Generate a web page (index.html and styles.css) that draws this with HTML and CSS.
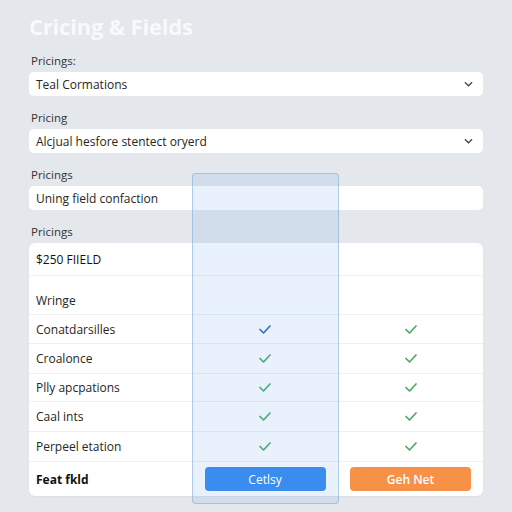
FILE: index.html
```html
<!DOCTYPE html>
<html>
<head>
<meta charset="utf-8">
<link rel="stylesheet" href="styles.css">
</head>
<body>
<div class="page">
  <h1 class="title">Cricing &amp; Fields</h1>

  <div class="field">
    <div class="label">Pricings:</div>
    <div class="box">
      <span>Teal Cormations</span>
      <svg class="chev" viewBox="0 0 10 6" width="9" height="6"><polyline points="1,1 5,5 9,1" fill="none" stroke="#444" stroke-width="1.4"/></svg>
    </div>
  </div>

  <div class="field">
    <div class="label">Pricing</div>
    <div class="box">
      <span>Alcjual hesfore stentect oryerd</span>
      <svg class="chev" viewBox="0 0 10 6" width="9" height="6"><polyline points="1,1 5,5 9,1" fill="none" stroke="#444" stroke-width="1.4"/></svg>
    </div>
  </div>

  <div class="field">
    <div class="label">Pricings</div>
    <div class="box"><span>Uning field confaction</span></div>
  </div>

  <div class="field">
    <div class="label">Pricings</div>
    <div class="card">
      <div class="row r-head"><div class="cell name strong">$250 FIIELD</div><div></div><div></div></div>
      <div class="row r-sub"><div class="cell name">Wringe</div><div></div><div></div></div>
      <div class="row r-a"><div class="cell name">Conatdarsilles</div>
        <div class="cell mid"><svg class="chk blue" viewBox="0 0 12 9" width="12" height="9"><polyline points="1,4.5 4.5,8 11,1"/></svg></div>
        <div class="cell mid"><svg class="chk" viewBox="0 0 12 9" width="12" height="9"><polyline points="1,4.5 4.5,8 11,1"/></svg></div>
      </div>
      <div class="row r-b"><div class="cell name">Croalonce</div>
        <div class="cell mid"><svg class="chk" viewBox="0 0 12 9" width="12" height="9"><polyline points="1,4.5 4.5,8 11,1"/></svg></div>
        <div class="cell mid"><svg class="chk" viewBox="0 0 12 9" width="12" height="9"><polyline points="1,4.5 4.5,8 11,1"/></svg></div>
      </div>
      <div class="row r-c"><div class="cell name">Plly apcpations</div>
        <div class="cell mid"><svg class="chk" viewBox="0 0 12 9" width="12" height="9"><polyline points="1,4.5 4.5,8 11,1"/></svg></div>
        <div class="cell mid"><svg class="chk" viewBox="0 0 12 9" width="12" height="9"><polyline points="1,4.5 4.5,8 11,1"/></svg></div>
      </div>
      <div class="row r-b"><div class="cell name">Caal ints</div>
        <div class="cell mid"><svg class="chk" viewBox="0 0 12 9" width="12" height="9"><polyline points="1,4.5 4.5,8 11,1"/></svg></div>
        <div class="cell mid"><svg class="chk" viewBox="0 0 12 9" width="12" height="9"><polyline points="1,4.5 4.5,8 11,1"/></svg></div>
      </div>
      <div class="row r-b"><div class="cell name">Perpeel etation</div>
        <div class="cell mid"><svg class="chk" viewBox="0 0 12 9" width="12" height="9"><polyline points="1,4.5 4.5,8 11,1"/></svg></div>
        <div class="cell mid"><svg class="chk" viewBox="0 0 12 9" width="12" height="9"><polyline points="1,4.5 4.5,8 11,1"/></svg></div>
      </div>
      <div class="row r-foot"><div class="cell name bold">Feat fkld</div>
        <div class="cell mid"><button class="btn btn-blue">Cetlsy</button></div>
        <div class="cell mid"><button class="btn btn-orange">Geh Net</button></div>
      </div>
    </div>
  </div>

  <div class="highlight"></div>
</div>
</body>
</html>
```

FILE: styles.css
```css
* { box-sizing: border-box; }
html, body { margin: 0; padding: 0; }
body {
  background: #e4e7eb;
  font-family: "Open Sans", "Noto Sans", sans-serif;
  color: #222;
  width: 512px;
  height: 512px;
  overflow: hidden;
}
.page {
  position: relative;
  padding: 12px 29px 0 29px;
}
.title {
  margin: 0 0 13px 0;
  font-size: 22px;
  line-height: 28px;
  font-weight: 700;
  color: #f8f9fb;
  letter-spacing: -0.2px;
}
.field { margin-bottom: 14px; }
.label {
  font-size: 11.5px;
  line-height: 16px;
  color: #333;
  margin: 0 0 3px 2px;
}
.box {
  height: 24px;
  background: #fff;
  border-radius: 5px;
  display: flex;
  align-items: center;
  justify-content: space-between;
  padding: 0 10px 0 7px;
  font-size: 12px;
  color: #262626;
}
.chev { display: block; }
.card {
  background: #fff;
  border-radius: 6px;
  overflow: hidden;
  box-shadow: 0 1px 2px rgba(0,0,0,0.04);
}
.row {
  display: grid;
  grid-template-columns: 163px 146px 1fr;
  border-top: 1px solid #eef0f2;
}
.row:first-child { border-top: none; }
.r-head { height: 32px; }
.r-sub { height: 39px; }
.r-a { height: 29px; }
.r-b { height: 30px; }
.r-c { height: 28px; }
.r-foot { height: 35px; }
.cell {
  display: flex;
  align-items: center;
  font-size: 12px;
  color: #262626;
}
.name { padding-left: 7px; }
.r-sub .name { align-items: flex-end; padding-bottom: 5px; }
.strong { font-weight: 500; color: #111; }
.bold { font-weight: 700; color: #111; }
.mid { justify-content: center; }
.chk polyline {
  fill: none;
  stroke: #4daa64;
  stroke-width: 1.7;
  stroke-linecap: round;
  stroke-linejoin: round;
}
.chk.blue polyline { stroke: #2a6cb5; }
.btn {
  position: relative;
  z-index: 2;
  width: 121px;
  height: 24px;
  border: none;
  border-radius: 4px;
  font-family: "Open Sans", "Noto Sans", sans-serif;
  font-size: 12px;
  color: #fff;
  padding: 0;
}
.btn-blue { background: #3b8cef; }
.btn-orange { background: #f79148; font-weight: 600; }
.highlight {
  position: absolute;
  left: 192px;
  top: 173px;
  width: 147px;
  height: 331px;
  background: rgba(110, 170, 235, 0.16);
  border: 1px solid rgba(120, 165, 215, 0.5);
  border-radius: 4px;
  pointer-events: none;
  z-index: 1;
}
```
